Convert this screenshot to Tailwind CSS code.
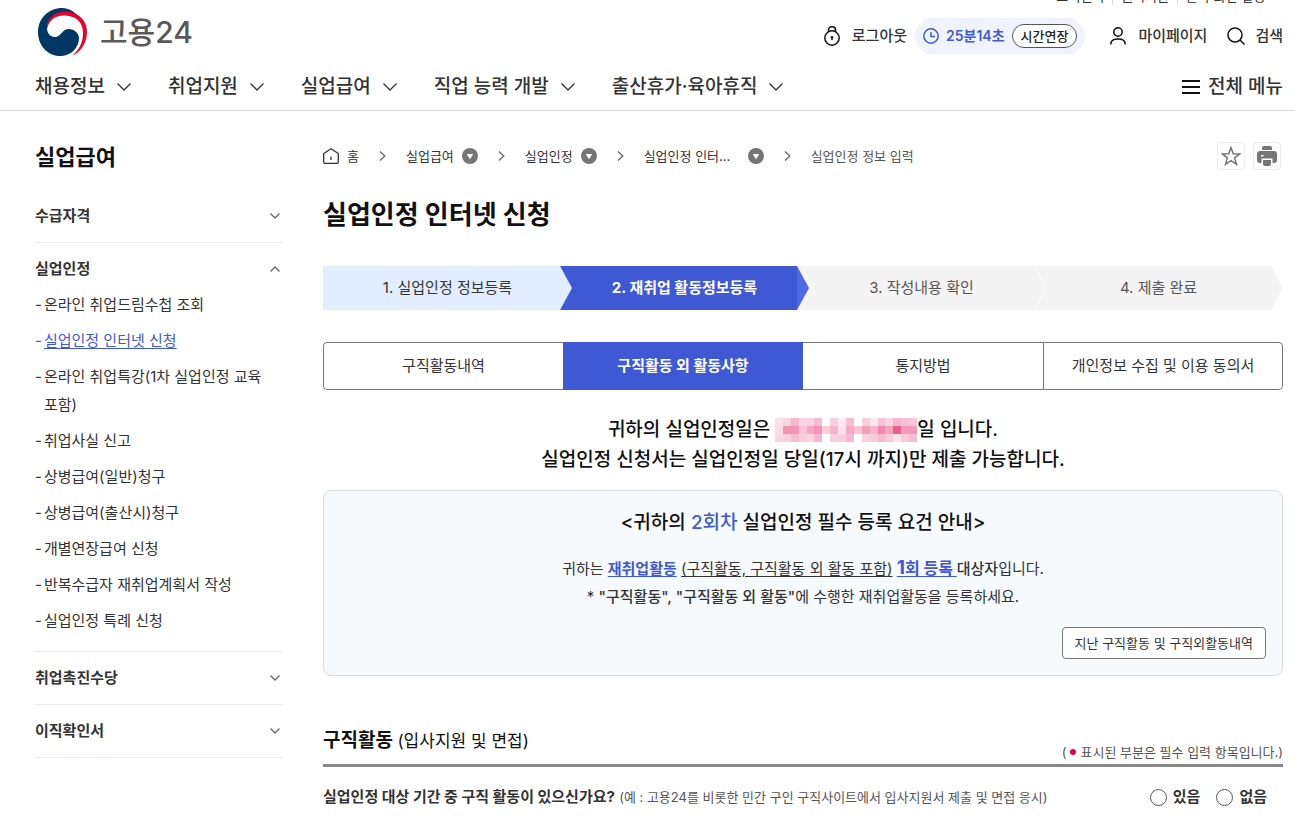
<!DOCTYPE html>
<html lang="ko">
<head>
    <meta charset="UTF-8">
    <meta name="viewport" content="width=device-width, initial-scale=1.0">
    <title>실업인정 인터넷 신청 - 고용24</title>
    <script src="https://cdn.jsdelivr.net/npm/@tailwindcss/browser@4"></script>
</head>
<body class="h-screen overflow-hidden bg-white text-[15px] leading-7 text-[#333] break-keep font-['Inter','Noto_Sans_CJK_KR',sans-serif]">

    <!-- Header -->
    <header class="border-b border-[#d8d8d8]">
        <!-- Utility row, scrolled almost out of view -->
        <div class="flex h-[5px] items-end justify-end overflow-hidden pr-3 text-[13px] leading-[18px]">
            <a href="#" class="pr-2">고객센터</a>
            <a href="#" class="border-l border-[#ddd] px-2">원격지원</a>
            <a href="#" class="border-l border-[#ddd] px-2">글자·화면 설정</a>
            <span class="pr-1">˅</span>
        </div>

        <div class="flex h-[62px] items-center justify-between pr-3 pl-[38px]">
            <a href="#" class="flex items-center gap-3 self-start pt-[3px] text-[30px] leading-9 font-medium text-[#595959]">
                <svg class="h-12 w-[50px]" viewBox="0 0 50 48" aria-hidden="true">
                    <path fill="#003764" d="M43 12C39 5 32 0 24 0 11 0 0 10 0 24s10 24 22 24c11 0 19-8 19-18 0-5-5-9-10-9-7 0-8 8-14 8-5 0-8-4-8-9C9 11 17 4 27 4c7 0 12 3 16 8z"/>
                    <path fill="#e4032e" d="M9 22C8 11 16 3.500 27 3.500c13 0 22 9 22 20 0 12-6 20-15 24.500 7-6 11-13 11-23C45 14 38 8 27 7.500 18 7 10 12 9 22z"/>
                </svg>
                <span>고용24</span>
            </a>

            <div class="flex items-center font-medium">
                <a href="#" class="flex items-center gap-3">
                    <svg class="h-5 w-4" viewBox="0 0 16 20" fill="none" stroke="#111" stroke-width="1.500" aria-hidden="true">
                        <circle cx="8" cy="12" r="7.200"/>
                        <path d="M4.500 6V3.800a3 3 0 0 1 3-3h1a3 3 0 0 1 3 3V6"/>
                        <path stroke-linecap="round" d="M8 10.500v3M7.300 11.300h1.400"/>
                    </svg>
                    로그아웃
                </a>
                <div class="ml-2 flex h-9 items-center gap-[7px] rounded-full bg-[#f0f3fc] px-2 text-[14px] text-[#3f59d4]">
                    <svg class="size-4" viewBox="0 0 16 16" fill="none" stroke="#3f59d4" stroke-width="1.500" aria-hidden="true">
                        <circle cx="8" cy="8" r="7.200"/>
                        <path d="M8 4v4.500h4"/>
                    </svg>
                    <span class="font-semibold">25분14초</span>
                    <button type="button" class="flex h-6 items-center rounded-full border border-[#555] bg-white px-2 text-[13px] text-[#222]">시간연장</button>
                </div>
                <a href="#" class="ml-[25px] flex items-center gap-3">
                    <svg class="h-[18px] w-4" viewBox="0 0 16 18" fill="none" stroke="#111" stroke-width="1.500" aria-hidden="true">
                        <circle cx="8" cy="5" r="4.200"/>
                        <path stroke-linecap="round" d="M.8 17c0-3.500 2.700-5 7.200-5s7.200 1.500 7.200 5"/>
                    </svg>
                    마이페이지
                </a>
                <a href="#" class="ml-5 flex items-center gap-[10px]">
                    <svg class="size-[18px]" viewBox="0 0 18 18" fill="none" stroke="#111" stroke-width="1.500" aria-hidden="true">
                        <circle cx="8" cy="8" r="7"/>
                        <path d="m13 13 4.500 4.500"/>
                    </svg>
                    검색
                </a>
            </div>
        </div>

        <nav class="flex h-[43px] items-center justify-between pr-3 pb-1 pl-[35px] text-[19px] font-medium">
            <ul class="flex gap-[37px]">
                <li><a href="#" class="flex items-center gap-3">채용정보 <svg class="h-2 w-[14px]" viewBox="0 0 14 8" fill="none" stroke="#333" stroke-width="1.300"><path d="m.5.5 6.500 6.500 6.500-6.500"/></svg></a></li>
                <li><a href="#" class="flex items-center gap-3">취업지원 <svg class="h-2 w-[14px]" viewBox="0 0 14 8" fill="none" stroke="#333" stroke-width="1.300"><path d="m.5.5 6.500 6.500 6.500-6.500"/></svg></a></li>
                <li><a href="#" class="flex items-center gap-3">실업급여 <svg class="h-2 w-[14px]" viewBox="0 0 14 8" fill="none" stroke="#333" stroke-width="1.300"><path d="m.5.5 6.500 6.500 6.500-6.500"/></svg></a></li>
                <li><a href="#" class="flex items-center gap-3">직업 능력 개발 <svg class="h-2 w-[14px]" viewBox="0 0 14 8" fill="none" stroke="#333" stroke-width="1.300"><path d="m.5.5 6.500 6.500 6.500-6.500"/></svg></a></li>
                <li><a href="#" class="flex items-center gap-3">출산휴가·육아휴직 <svg class="h-2 w-[14px]" viewBox="0 0 14 8" fill="none" stroke="#333" stroke-width="1.300"><path d="m.5.5 6.500 6.500 6.500-6.500"/></svg></a></li>
            </ul>
            <button type="button" class="flex items-center gap-2">
                <svg class="h-4 w-[18px]" viewBox="0 0 18 16" fill="none" stroke="#111" stroke-width="2" aria-hidden="true"><path d="M0 2h18M0 8h18M0 14h18"/></svg>
                전체 메뉴
            </button>
        </nav>
    </header>

    <div class="flex gap-10 pr-3 pl-[35px]">
        <!-- Side menu -->
        <aside class="w-[248px] shrink-0 pt-[30px]">
            <h2 class="mb-[17px] text-[22px] leading-8 font-bold text-[#111]">실업급여</h2>
            <ul>
                <li class="border-b border-[#ebebeb]">
                    <button type="button" class="flex w-full items-center justify-between py-3 pr-[3px] font-bold">수급자격 <svg class="h-[6px] w-[10px]" viewBox="0 0 10 6" fill="none" stroke="#666" stroke-width="1.300"><path d="m.5.5 4.500 4.500 4.500-4.500"/></svg></button>
                </li>
                <li class="border-b border-[#ebebeb] pb-4">
                    <button type="button" class="flex w-full items-center justify-between pt-3 pr-[3px] pb-2 font-bold">실업인정 <svg class="h-[6px] w-[10px]" viewBox="0 0 10 6" fill="none" stroke="#666" stroke-width="1.300"><path d="m.5 5.500 4.500-4.500 4.500 4.500"/></svg></button>
                    <ul class="flex flex-col gap-2">
                        <li class="flex gap-[2px]"><span>-</span><a href="#">온라인 취업드림수첩 조회</a></li>
                        <li class="flex gap-[2px] text-[#3f59d4]"><span>-</span><a href="#" class="underline underline-offset-2">실업인정 인터넷 신청</a></li>
                        <li class="flex gap-[2px]"><span>-</span><a href="#">온라인 취업특강(1차 실업인정 교육 포함)</a></li>
                        <li class="flex gap-[2px]"><span>-</span><a href="#">취업사실 신고</a></li>
                        <li class="flex gap-[2px]"><span>-</span><a href="#">상병급여(일반)청구</a></li>
                        <li class="flex gap-[2px]"><span>-</span><a href="#">상병급여(출산시)청구</a></li>
                        <li class="flex gap-[2px]"><span>-</span><a href="#">개별연장급여 신청</a></li>
                        <li class="flex gap-[2px]"><span>-</span><a href="#">반복수급자 재취업계획서 작성</a></li>
                        <li class="flex gap-[2px]"><span>-</span><a href="#">실업인정 특례 신청</a></li>
                    </ul>
                </li>
                <li class="border-b border-[#ebebeb]">
                    <button type="button" class="flex w-full items-center justify-between py-3 pr-[3px] font-bold">취업촉진수당 <svg class="h-[6px] w-[10px]" viewBox="0 0 10 6" fill="none" stroke="#666" stroke-width="1.300"><path d="m.5.5 4.500 4.500 4.500-4.500"/></svg></button>
                </li>
                <li class="border-b border-[#ebebeb]">
                    <button type="button" class="flex w-full items-center justify-between py-3 pr-[3px] font-bold">이직확인서 <svg class="h-[6px] w-[10px]" viewBox="0 0 10 6" fill="none" stroke="#666" stroke-width="1.300"><path d="m.5.5 4.500 4.500 4.500-4.500"/></svg></button>
                </li>
            </ul>
        </aside>

        <main class="min-w-0 flex-1 pt-[31px]">
            <!-- Breadcrumb -->
            <div class="flex items-center justify-between">
                <nav class="flex items-center text-[13px]">
                    <a href="#" class="flex items-center gap-2">
                        <svg class="size-4" viewBox="0 0 16 16" fill="none" stroke="#333" stroke-width="1.300" aria-hidden="true">
                            <path stroke-linejoin="round" d="M.7 5.500 8 .8l7.300 4.700v8.800a1 1 0 0 1-1 1H1.700a1 1 0 0 1-1-1z"/>
                            <path d="M8 8.500v3.500"/>
                        </svg>
                        홈
                    </a>
                    <svg class="mx-5 h-[10px] w-[7px]" viewBox="0 0 7 10" fill="none" stroke="#666" stroke-width="1.300"><path d="m1 .5 4.800 4.500L1 9.500"/></svg>
                    <a href="#">실업급여</a>
                    <button type="button" class="ml-2" aria-label="실업급여 메뉴 열기"><svg class="size-4" viewBox="0 0 16 16"><circle cx="8" cy="8" r="8" fill="#767676"/><path fill="#fff" stroke="#fff" stroke-linejoin="round" d="M5.500 6.500h5L8 10.500z"/></svg></button>
                    <svg class="mx-5 h-[10px] w-[7px]" viewBox="0 0 7 10" fill="none" stroke="#666" stroke-width="1.300"><path d="m1 .5 4.800 4.500L1 9.500"/></svg>
                    <a href="#">실업인정</a>
                    <button type="button" class="ml-2" aria-label="실업인정 메뉴 열기"><svg class="size-4" viewBox="0 0 16 16"><circle cx="8" cy="8" r="8" fill="#767676"/><path fill="#fff" stroke="#fff" stroke-linejoin="round" d="M5.500 6.500h5L8 10.500z"/></svg></button>
                    <svg class="mx-5 h-[10px] w-[7px]" viewBox="0 0 7 10" fill="none" stroke="#666" stroke-width="1.300"><path d="m1 .5 4.800 4.500L1 9.500"/></svg>
                    <a href="#" class="w-24">실업인정 인터...</a>
                    <button type="button" class="ml-2" aria-label="실업인정 인터넷 신청 메뉴 열기"><svg class="size-4" viewBox="0 0 16 16"><circle cx="8" cy="8" r="8" fill="#767676"/><path fill="#fff" stroke="#fff" stroke-linejoin="round" d="M5.500 6.500h5L8 10.500z"/></svg></button>
                    <svg class="mx-5 h-[10px] w-[7px]" viewBox="0 0 7 10" fill="none" stroke="#666" stroke-width="1.300"><path d="m1 .5 4.800 4.500L1 9.500"/></svg>
                    <span class="text-[#555]">실업인정 정보 입력</span>
                </nav>
                <div class="flex gap-2 pr-[2px]">
                    <button type="button" aria-label="즐겨찾기" class="flex size-7 items-center justify-center rounded border border-[#ebebeb]">
                        <svg class="size-5" viewBox="0 0 20 20" fill="none" stroke="#767676" stroke-width="1.500"><path d="m10 1.500 2.200 6.200 6.600.2-5.200 4 1.900 6.400L10 14.600l-5.500 3.700 1.900-6.400-5.200-4 6.600-.2z"/></svg>
                    </button>
                    <button type="button" aria-label="인쇄" class="flex size-7 items-center justify-center rounded border border-[#ebebeb]">
                        <svg class="size-5" viewBox="0 0 20 20" fill="#767676">
                            <path d="M5 4V2a2 2 0 0 1 2-2h6a2 2 0 0 1 2 2v2z"/>
                            <rect y="5" width="20" height="12" rx="3"/>
                            <path fill="#fff" d="M4.500 12.500h11V17h-11zM4 9h2.500v1.500H4z"/>
                            <path d="M6 14h8v4a2 2 0 0 1-2 2H8a2 2 0 0 1-2-2z"/>
                        </svg>
                    </button>
                </div>
            </div>

            <h1 class="mt-[25px] text-[26px] leading-10 font-bold text-[#111]">실업인정 인터넷 신청</h1>

            <!-- Steps -->
            <ol class="mt-[31px] flex h-11 pr-3 text-center leading-11">
                <li class="relative z-30 flex-1 bg-[#e2eeff] pl-3">1. 실업인정 정보등록
                    <svg class="absolute top-0 left-full h-11 w-3" viewBox="0 0 12 44"><path fill="#e2eeff" d="M0 0l12 22L0 44z"/></svg>
                </li>
                <li class="relative z-20 flex-1 bg-[#3f59d4] pl-3 font-bold text-white">2. 재취업 활동정보등록
                    <svg class="absolute top-0 left-full h-11 w-3" viewBox="0 0 12 44"><path fill="#4f67e0" d="M0 0l12 22L0 44z"/></svg>
                </li>
                <li class="relative z-10 flex-1 bg-[#f4f4f4] pl-3 text-[#555]">3. 작성내용 확인
                    <svg class="absolute top-0 left-full h-11 w-3" viewBox="0 0 12 44"><path fill="#f4f4f4" d="M0 0l12 22L0 44z"/><path fill="none" stroke="#fff" d="M0 0l11.500 22L0 44"/></svg>
                </li>
                <li class="relative flex-1 bg-[#f4f4f4] pl-3 text-[#555]">4. 제출 완료
                    <svg class="absolute top-0 left-full h-11 w-3" viewBox="0 0 12 44"><path fill="#f4f4f4" d="M0 0l12 22L0 44z"/></svg>
                </li>
            </ol>

            <!-- Tabs -->
            <div class="mt-8 grid h-12 grid-cols-4 overflow-hidden rounded">
                <button type="button" class="rounded-l border border-r-0 border-[#767676]">구직활동내역</button>
                <button type="button" class="bg-[#3f59d4] font-bold text-white">구직활동 외 활동사항</button>
                <button type="button" class="border-y border-[#767676]">통지방법</button>
                <button type="button" class="rounded-r border border-[#767676]">개인정보 수집 및 이용 동의서</button>
            </div>

            <div class="mt-[25px] text-center text-[19px] leading-[30px] font-medium text-[#111]">
                <p class="flex items-center justify-center">귀하의 실업인정일은&nbsp;<svg id="masked-date" class="h-6 w-[142px]" viewBox="0 0 18 3" preserveAspectRatio="none" shape-rendering="crispEdges" role="img" aria-label="가려진 날짜"></svg>일 입니다.</p>
                <p>실업인정 신청서는 실업인정일 당일(17시 까지)만 제출 가능합니다.</p>
            </div>

            <section class="mt-[15px] flex flex-col rounded-lg border border-[#d8dce0] bg-[#f6fafd] px-4 pt-[17px] pb-4 text-center">
                <h2 class="text-[19px] leading-[30px] font-medium text-[#111]">&lt;귀하의 <span class="text-[#3f59d4]">2회차</span> 실업인정 필수 등록 요건 안내&gt;</h2>
                <p class="mt-[17px]">귀하는 <strong class="text-[#3f59d4] underline underline-offset-2">재취업활동</strong> <u class="underline-offset-2">(구직활동, 구직활동 외 활동 포함)</u> <strong class="text-[16px] leading-none text-[#3f59d4] underline underline-offset-2"><span class="text-[19px]">1</span>회 등록 </strong><strong class="font-medium">대상자</strong>입니다.</p>
                <p>* <strong class="font-medium">"구직활동", "구직활동 외 활동"</strong>에 수행한 재취업활동을 등록하세요.</p>
                <button type="button" class="mt-4 h-8 self-end rounded border border-[#767676] bg-white px-3 text-[13px]">지난 구직활동 및 구직외활동내역</button>
            </section>

            <section>
                <div class="mt-[50px] flex items-end justify-between border-b-3 border-[#888]">
                    <h2 class="pb-2 text-[19px] leading-[30px] font-bold text-[#111]">구직활동 <span class="text-[17px] font-normal">(입사지원 및 면접)</span></h2>
                    <p class="flex items-center gap-1 text-[13px] leading-6 text-[#555]">( <span class="size-[6px] rounded-full bg-[#e0004d]"></span> 표시된 부분은 필수 입력 항목입니다.)</p>
                </div>
                <fieldset class="flex items-center justify-between pt-4 pr-4">
                    <p><span class="font-bold">실업인정 대상 기간 중 구직 활동이 있으신가요?</span> <span class="text-[13px] text-[#555]">(예 : 고용24를 비롯한 민간 구인 구직사이트에서 입사지원서 제출 및 면접 응시)</span></p>
                    <div class="flex gap-4 font-bold">
                        <label class="flex items-center gap-[6px]"><input type="radio" name="activity" class="size-[17px] appearance-none rounded-full border border-[#555] bg-white checked:border-4">있음</label>
                        <label class="flex items-center gap-[6px]"><input type="radio" name="activity" class="size-[17px] appearance-none rounded-full border border-[#555] bg-white checked:border-4">없음</label>
                    </div>
                </fieldset>
            </section>
        </main>
    </div>

    <script>
        // Mosaic over the date: one row of colours per line, "fff" is an empty cell
        const rows = [
            "fcdfe8 f9d5e1 f5b5cd f9d3e0 f9d3e0 f6bcd3 fff f9cfdd fdeaf1 f7bcd2 fff f9cfdd fdeaf1 f7c2d6 f9d5e1 f7b5ca f7c0d6 f6c5d6",
            "fbdbe4 f195b2 f195b5 f7c3d6 f3a8c1 f195ba f9cfdd f5b5c6 fae3f1 f3abc4 f5c5d6 f39fba f6b5ca ee88b0 f3a5bf ec5f8d f199b8 f199b8",
            "f9d5e1 f9d0dc f6bcd0 f9cad8 f9d5e1 f6b8d0 fff f9cfdd f9cfdd f6b8d4 fff f9d0dc f9cad8 f5bccd f9cad8 fde4e9 f9cad8 f5bcd3"
        ];
        document.getElementById("masked-date").innerHTML = rows.map((row, y) =>
            row.split(" ").map((color, x) => `<rect x="${x}" y="${y}" width="1" height="1" fill="#${color}"/>`).join("")
        ).join("");
    </script>
</body>
</html>
